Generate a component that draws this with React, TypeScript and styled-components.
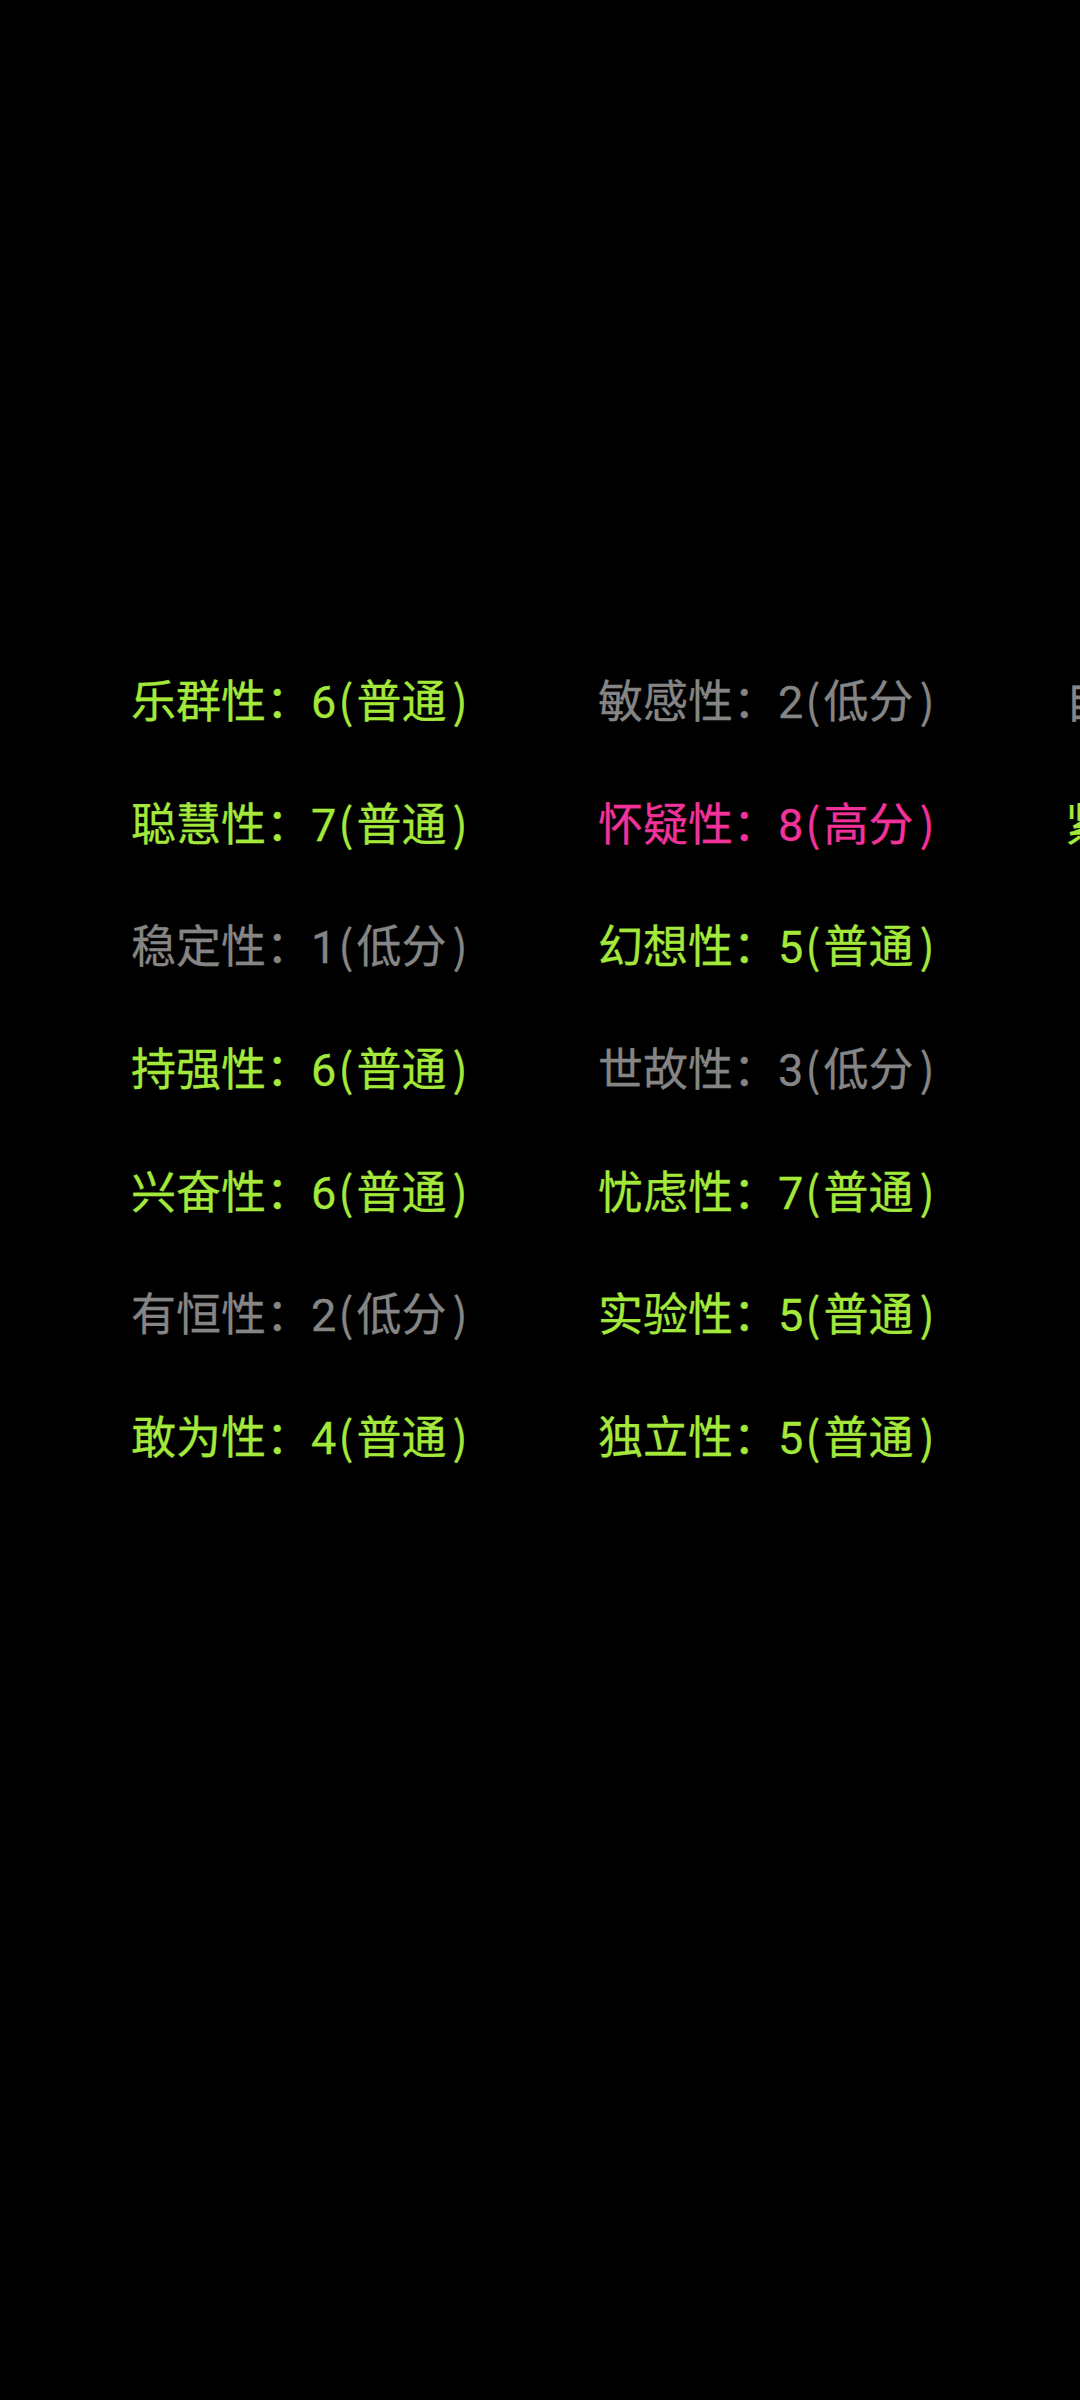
import React from "react";
import styled, { createGlobalStyle } from "styled-components";

const Global = createGlobalStyle`
  html, body {
    margin: 0;
    padding: 0;
    background: #000;
  }
  body {
    width: 1080px;
    height: 2400px;
    overflow: hidden;
  }
`;

const Screen = styled.div`
  width: 1080px;
  height: 2400px;
  background: #000;
  overflow: hidden;
  padding-top: 638px;
  box-sizing: border-box;
`;

const Columns = styled.div`
  display: flex;
  padding-left: 131px;
  width: max-content;
`;

const Column = styled.div`
  display: flex;
  flex-direction: column;
  width: 467px;
  flex: none;
`;

type Level = "low" | "mid" | "high";

const colors: Record<Level, string> = {
  low: "#858585",
  mid: "#a3e83a",
  high: "#f2329b",
};

const Item = styled.div<{ $level: Level }>`
  height: 122.67px;
  line-height: 122.67px;
  font-family: "Noto Sans CJK SC", "Noto Sans", sans-serif;
  font-size: 45px;
  white-space: nowrap;
  color: ${(p) => colors[p.$level]};
  -webkit-text-stroke: 0.3px ${(p) => colors[p.$level]};
`;

const Score = styled.span`
  font-family: Roboto, "Noto Sans CJK SC", sans-serif;
  margin-right: 2px;
`;

const Grade = styled.span`
  padding: 0 6px 0 3px;
`;

type Trait = { name: string; score: number; level: Level };

const label: Record<Level, string> = { low: "低分", mid: "普通", high: "高分" };

const data: Trait[][] = [
  [
    { name: "乐群性", score: 6, level: "mid" },
    { name: "聪慧性", score: 7, level: "mid" },
    { name: "稳定性", score: 1, level: "low" },
    { name: "持强性", score: 6, level: "mid" },
    { name: "兴奋性", score: 6, level: "mid" },
    { name: "有恒性", score: 2, level: "low" },
    { name: "敢为性", score: 4, level: "mid" },
  ],
  [
    { name: "敏感性", score: 2, level: "low" },
    { name: "怀疑性", score: 8, level: "high" },
    { name: "幻想性", score: 5, level: "mid" },
    { name: "世故性", score: 3, level: "low" },
    { name: "忧虑性", score: 7, level: "mid" },
    { name: "实验性", score: 5, level: "mid" },
    { name: "独立性", score: 5, level: "mid" },
  ],
  [
    { name: "自律性", score: 3, level: "low" },
    { name: "紧张性", score: 6, level: "mid" },
  ],
];

export default function App() {
  return (
    <Screen>
      <Global />
      <Columns>
        {data.map((col, i) => (
          <Column key={i}>
            {col.map((t) => (
              <Item key={t.name} $level={t.level}>
                {t.name}：<Score>{t.score}</Score>(<Grade>{label[t.level]}</Grade>)
              </Item>
            ))}
          </Column>
        ))}
      </Columns>
    </Screen>
  );
}
